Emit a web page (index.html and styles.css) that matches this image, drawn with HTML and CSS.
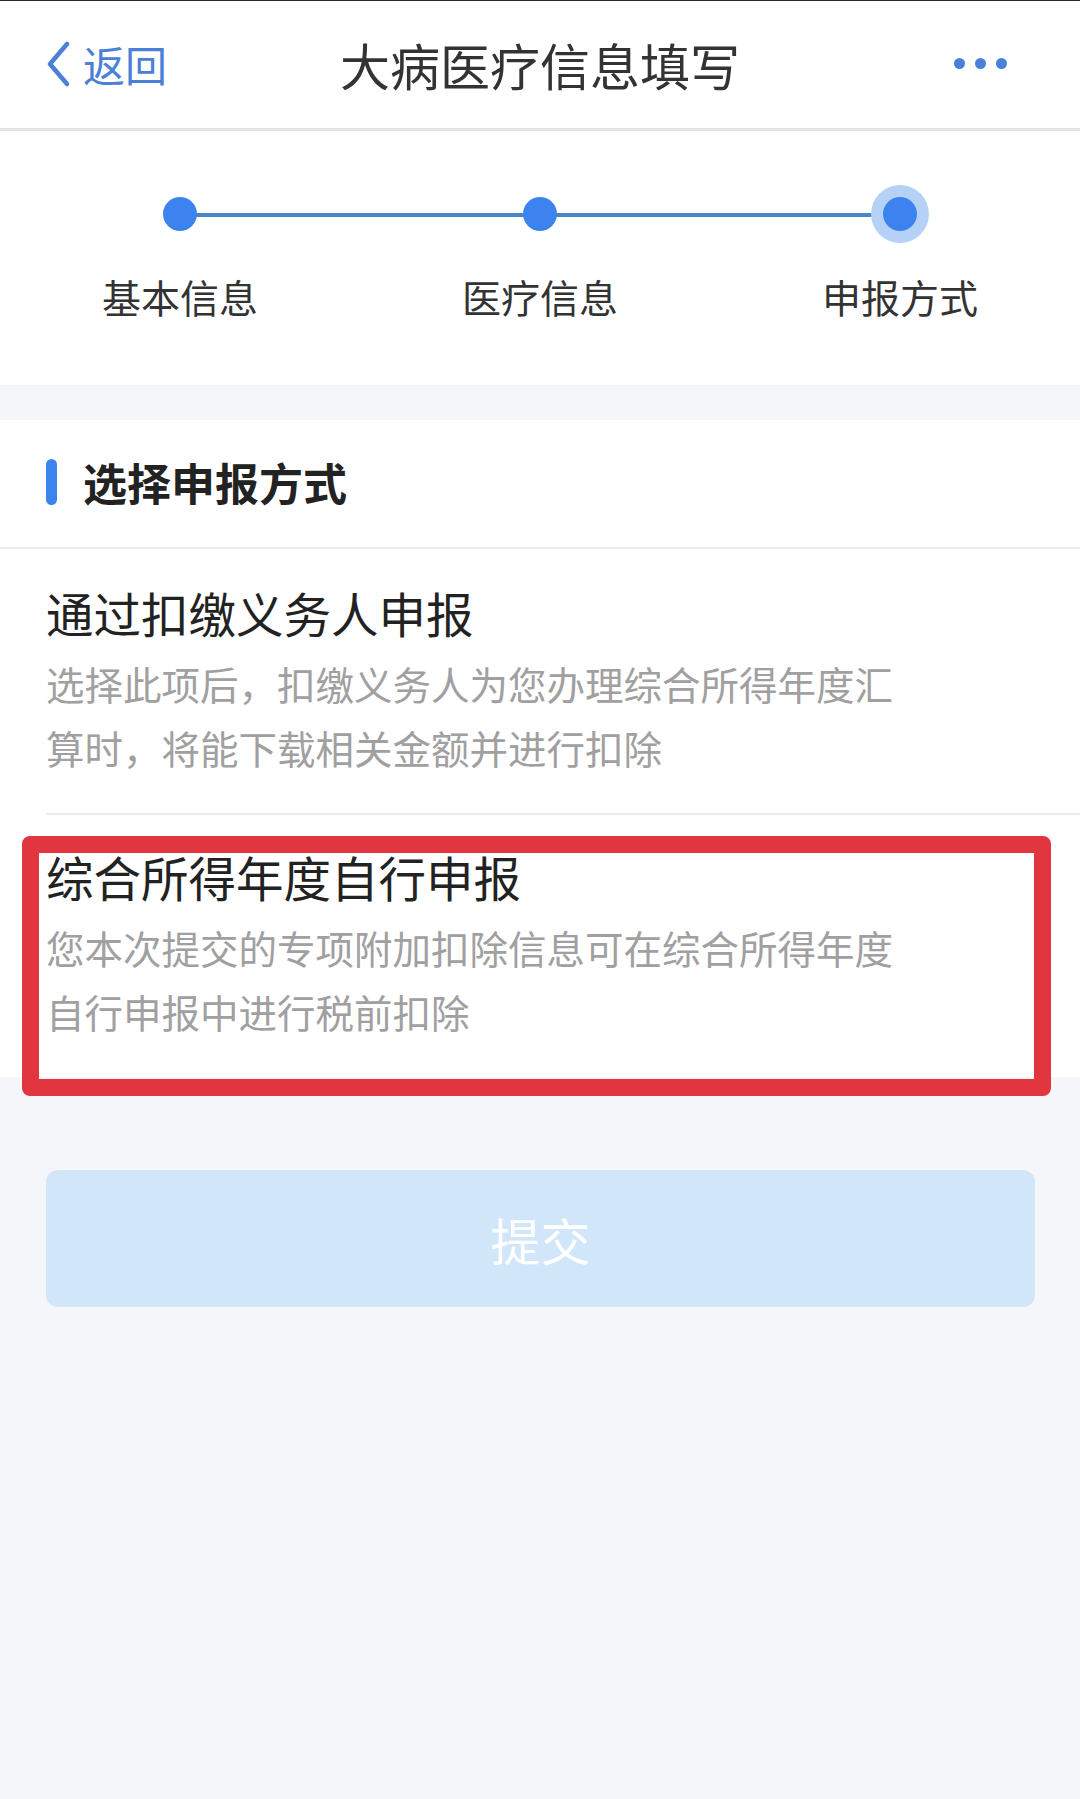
FILE: index.html
```html
<!DOCTYPE html>
<html lang="zh-CN">
  <head>
    <meta charset="UTF-8" />
    <meta name="viewport" content="width=device-width, initial-scale=1.0" />
    <title>大病医疗信息填写</title>
    <link rel="stylesheet" href="styles.css">
  </head>
  <body>
    <div class="navbar">
      <div class="nav-back">
        <svg class="back-icon" width="26" height="46" viewBox="0 0 26 46">
          <path d="M22 3 L5 23 L22 43" fill="none" stroke="#4a80d8" stroke-width="4.5" stroke-linecap="round" stroke-linejoin="round" />
        </svg>
        <span>返回</span>
      </div>
      <div class="nav-title">大病医疗信息填写</div>
      <div class="nav-more">
        <span class="dot"></span>
        <span class="dot"></span>
        <span class="dot"></span>
      </div>
    </div>

    <div class="stepper">
      <div class="step-line"></div>
      <div class="step">
        <div class="step-dot-wrap"><span class="step-dot"></span></div>
        <div class="step-label">基本信息</div>
      </div>
      <div class="step">
        <div class="step-dot-wrap"><span class="step-dot"></span></div>
        <div class="step-label">医疗信息</div>
      </div>
      <div class="step active">
        <div class="step-dot-wrap"><span class="step-dot"></span></div>
        <div class="step-label">申报方式</div>
      </div>
    </div>

    <div class="section">
      <div class="section-head">
        <span class="head-bar"></span>
        <h2>选择申报方式</h2>
      </div>
      <div class="option">
        <div class="option-title">通过扣缴义务人申报</div>
        <div class="option-desc">选择此项后，扣缴义务人为您办理综合所得年度汇<br />算时，将能下载相关金额并进行扣除</div>
      </div>
      <div class="option selected">
        <div class="option-title">综合所得年度自行申报</div>
        <div class="option-desc">您本次提交的专项附加扣除信息可在综合所得年度<br />自行申报中进行税前扣除</div>
        <div class="highlight"></div>
      </div>
    </div>

    <div class="actions">
      <button class="submit-btn" disabled>提交</button>
    </div>
  </body>
</html>
```

FILE: styles.css
```css
body {
  margin: 0;
  padding: 0;
  background-color: #f4f6fa;
  font-family: "Noto Sans CJK SC", "Noto Sans", sans-serif;
  color: #333;
  min-height: 1799px;
}

.navbar {
  position: relative;
  height: 127px;
  background-color: #fff;
  border-top: 1px solid #2a2a2a;
  border-bottom: 3px solid #e4e4e6;
  display: flex;
  align-items: center;
  justify-content: center;
}

.nav-back {
  position: absolute;
  left: 45px;
  top: 40px;
  display: flex;
  align-items: center;
  gap: 12px;
  color: #4a80d8;
  font-size: 42px;
  line-height: 46px;
}

.back-icon {
  display: block;
}

.nav-title {
  font-size: 50px;
  line-height: 60px;
  color: #333;
  margin-top: -2px;
}

.nav-more {
  position: absolute;
  right: 73px;
  top: 57px;
  display: flex;
  gap: 10px;
}

.nav-more .dot {
  width: 11px;
  height: 11px;
  border-radius: 50%;
  background-color: #4a80d8;
}

.stepper {
  position: relative;
  display: grid;
  grid-template-columns: repeat(3, 1fr);
  background-color: #fff;
  padding: 54px 0 66px;
}

.step-line {
  position: absolute;
  left: 180px;
  right: 180px;
  top: 82px;
  height: 4px;
  background-color: #4c84c9;
}

.step {
  position: relative;
  display: flex;
  flex-direction: column;
  align-items: center;
}

.step-dot-wrap {
  width: 58px;
  height: 58px;
  border-radius: 50%;
  display: flex;
  align-items: center;
  justify-content: center;
}

.step.active .step-dot-wrap {
  background-color: #b5d2f6;
}

.step-dot {
  width: 34px;
  height: 34px;
  border-radius: 50%;
  background-color: #3d83f0;
}

.step-label {
  margin-top: 30px;
  font-size: 39px;
  line-height: 46px;
  color: #333;
}

.section {
  margin-top: 35px;
  background-color: #fff;
}

.section-head {
  display: flex;
  align-items: center;
  height: 124px;
  padding-left: 46px;
  padding-bottom: 3px;
  border-bottom: 2px solid #ebebeb;
}

.head-bar {
  width: 11px;
  height: 46px;
  border-radius: 6px;
  background-color: #3d83f0;
  margin-right: 26px;
}

.section-head h2 {
  margin: 0;
  font-size: 44px;
  font-weight: bold;
  color: #222;
}

.option {
  position: relative;
  margin-left: 46px;
  padding: 32px 0 34px;
  border-bottom: 2px solid #ebebeb;
}

.option.selected {
  padding: 30px 0 34px;
  border-bottom: none;
}

.option-title {
  font-size: 47.5px;
  line-height: 64px;
  color: #222;
}

.option-desc {
  margin-top: 6px;
  font-size: 38.5px;
  line-height: 64px;
  color: #a0a0a0;
}

.highlight {
  position: absolute;
  left: -24px;
  right: 29px;
  top: 21px;
  bottom: -19px;
  border: 17px solid #e1363f;
  border-radius: 8px;
}

.actions {
  padding: 93px 45px 0 46px;
}

.submit-btn {
  display: block;
  width: 100%;
  height: 137px;
  border: none;
  border-radius: 12px;
  background-color: #d2e6fa;
  color: #fff;
  font-family: "Noto Sans CJK SC", "Noto Sans", sans-serif;
  font-size: 50px;
}
```
